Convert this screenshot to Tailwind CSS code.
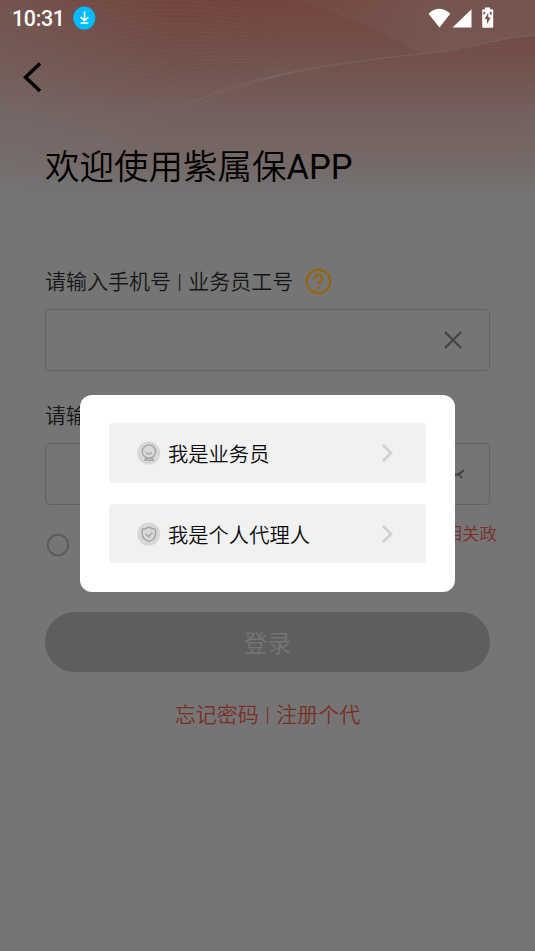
<!DOCTYPE html>
<html lang="zh-CN">
<head>
<meta charset="utf-8">
<meta name="viewport" content="width=device-width, initial-scale=1">
<title>紫属保</title>
<script src="https://cdn.jsdelivr.net/npm/@tailwindcss/browser@4"></script>
</head>
<body class="relative h-[951px] w-[535px] overflow-hidden bg-[#757575] font-['Roboto','Noto_Sans_CJK_SC',sans-serif]">
  <!-- Header artwork -->
  <svg class="absolute inset-0" width="535" height="215" viewBox="0 0 535 215" fill="none" aria-hidden="true">
    <defs>
      <linearGradient id="base" x1="0" y1="0" x2="0" y2="1">
        <stop offset="0" stop-color="#73443d"/><stop offset=".22" stop-color="#724d47"/><stop offset=".43" stop-color="#735955"/><stop offset=".52" stop-color="#73605e"/><stop offset=".75" stop-color="#756866"/><stop offset=".87" stop-color="#747171"/><stop offset="1" stop-color="#757575"/>
      </linearGradient>
      <linearGradient id="side" x1="0" y1="0" x2="1" y2="0">
        <stop offset="0" stop-color="#757575" stop-opacity=".3"/><stop offset=".32" stop-color="#757575" stop-opacity="0"/>
      </linearGradient>
      <linearGradient id="haze" gradientUnits="userSpaceOnUse" x1="330" y1="40" x2="440" y2="10">
        <stop offset="0" stop-color="#785a54" stop-opacity=".2"/><stop offset="1" stop-color="#785a54" stop-opacity=".75"/>
      </linearGradient>
    </defs>
    <rect width="535" height="215" fill="url(#base)"/>
    <rect width="535" height="215" fill="url(#side)"/>
    <path d="M290 0C350 14 392 36 420 54C470 49 510 35 535 36V0Z" fill="url(#haze)"/>
    <g id="waves" stroke="#8c8580" stroke-opacity=".13" stroke-width=".8"></g>
    <path d="M190 103C260 73 330 64 420 54C470 49 510 35 535 36" stroke="#7c7672" stroke-opacity=".6" stroke-width=".8"/>
    <path d="M420 54C470 50 510 39 535 41M440 53C480 50 515 45 535 46" stroke="#7c7672" stroke-opacity=".2" stroke-width=".8"/>
    <path d="M535 82Q529 125 504 172M535 92Q530 132 510 174M535 104Q531 140 516 176M535 118Q531 148 522 178" stroke="#888" stroke-opacity=".13" stroke-width=".8"/>
  </svg>

  <main class="relative flex h-full flex-col">
    <header class="flex h-9 items-center pl-3 pr-[41px] text-white">
      <span class="w-[61px] pt-[2px] text-[21.5px] leading-6 font-medium tracking-[-0.4px]">10:31</span>
      <svg width="23" height="24" viewBox="0 0 23 24"><ellipse cx="11.3" cy="12" rx="11" ry="11.5" fill="#00bbff"/><path d="M11.5 5.5v9M7.6 11l3.9 3.9 3.9-3.9M7.6 17h7.8" fill="none" stroke="#fff" stroke-width="1.6"/></svg>
      <div class="ml-auto flex items-center">
        <svg width="66" height="22" viewBox="0 0 66 22" fill="#fff"><path d="M.5 6.7Q11 -3 22.3 6.7L11.5 20.5ZM24.5 20.5L43.5 2.2V20.5Z"/><path fill-rule="evenodd" d="M57 .6h5v1.6h2.2q1 0 1 1v16.3q0 1.2-1 1.2h-9q-1 0-1-1.2V3.2q0-1 1-1H57ZM60 6l-3.3 6h2.3v5l3.8-6.5h-2.5V6ZM55.4 5v3l1.3-.8.8-2.2ZM61.6 5l.4 2.5L63.6 8V5Z"/></svg>
      </div>
    </header>

    <nav class="flex h-20 pl-[22px] pt-[26px]">
      <svg width="22" height="32" viewBox="0 0 22 32" fill="none"><path d="M18 1.5L3.5 15.3L18 29" stroke="#000" stroke-width="3.4"/></svg>
    </nav>

    <h1 class="mt-[26px] h-[50px] pl-[45px] text-[34.5px] leading-[50px] font-[350] whitespace-nowrap text-black">欢迎使用紫属保<span class="font-normal">APP</span></h1>

    <section class="flex flex-col px-[45px] pt-[74px]">
      <div class="flex h-[30px] items-center text-[21px] leading-[30px] font-[350] text-[#161616]">
        <label class="w-[260px] pt-[2px] [word-spacing:1.2px] whitespace-nowrap">请输入手机号 | 业务员工号</label>
        <svg width="27" height="27" viewBox="0 0 27 27" fill="none" stroke="#9c6206" stroke-width="2"><circle cx="13.4" cy="13.4" r="11.7"/><path d="M9.8 10.7C9.8 5.9 17.2 6 17.2 10.3C17.2 13 13.5 13.2 13.5 16.5M13.5 18.2v2.2"/></svg>
      </div>
      <div class="mt-[13px] flex h-[62px] items-center justify-end rounded-[5px] border-[1.5px] border-[#636363] pr-[26px]">
        <svg width="20" height="20" viewBox="0 0 20 20" fill="none" stroke="#444" stroke-width="2.3"><path d="M2 2L18 18M18 2L2 18"/></svg>
      </div>
      <div class="mt-[29px] h-[30px] pt-px text-[21px] leading-[30px] font-[350] text-[#161616]">请输</div>
      <div class="mt-[13px] flex h-[62px] items-center justify-end rounded-[5px] border-[1.5px] border-[#636363] pr-[23px]">
        <svg width="24" height="14" viewBox="0 0 24 14" fill="none" stroke="#3f3f3f" stroke-width="1.8"><path d="M2 3Q12 13 22 3M17 7.5L20 11M12 8v4M6 7L3 11"/></svg>
      </div>
    </section>

    <div class="flex h-[58px] justify-between pl-[46px] pr-[38px] pt-[14px]">
      <svg class="mt-[14px]" width="24" height="24" viewBox="0 0 24 24"><circle cx="12" cy="12" r="10.2" fill="none" stroke="#5b5b5b" stroke-width="1.9"/></svg>
      <span class="h-7 pt-px text-[17.5px] leading-7 font-[350] text-[#7b2e26]">相关政</span>
    </div>

    <button class="mx-[45px] mt-[49px] flex h-[60px] shrink-0 items-center justify-center rounded-full bg-[#5e5e5e] pt-[4px] text-[24px] font-[350] text-[#757575]">登录</button>
    <div class="mt-[28px] flex h-[30px] justify-center text-[21px] leading-[30px] font-[350] [word-spacing:1.2px] whitespace-pre text-[#7b2e26]">忘记密码 | 注册个代</div>
  </main>

  <!-- Role chooser -->
  <div role="dialog" class="absolute left-[80px] top-[395px] flex h-[197px] w-[375px] flex-col gap-[21px] rounded-[12px] bg-white px-[29px] pt-[28px]">
    <button class="flex h-[60px] items-center rounded-[4px] bg-[#f1f1f1] pl-7 pr-[32px] text-[20.3px] leading-[30px] font-[350] text-[#0c0c0c]">
      <svg width="24" height="24" viewBox="0 0 24 24" fill="none" stroke="#a5a5a5" stroke-width="1.4"><circle cx="11.7" cy="12" r="11.5" fill="#d8d8d8" stroke="none"/><circle cx="11.9" cy="10.5" r="6.6"/><path d="M9 11.5Q11.9 14.5 14.8 11.5M9 16.5L8 19.2H16L15 16.5M9.3 17.2H14.7"/></svg>
      <span class="ml-[7px] pt-[4px]">我是业务员</span>
      <svg class="ml-auto" width="14" height="20" viewBox="0 0 14 20" fill="none"><path d="M3 2L11 10L3 18" stroke="#d0d0d0" stroke-width="2.8"/></svg>
    </button>
    <button class="flex h-[59px] items-center rounded-[4px] bg-[#f1f1f1] pl-7 pr-[32px] text-[20.3px] leading-[30px] font-[350] text-[#0c0c0c]">
      <svg width="24" height="24" viewBox="0 0 24 24" fill="none" stroke="#a5a5a5" stroke-width="1.4"><circle cx="11.7" cy="12" r="11.5" fill="#d8d8d8" stroke="none"/><path d="M11.9 5.2Q14.8 7 18.5 7.3V12Q18.5 17.2 11.9 19.3Q5.3 17.2 5.3 12V7.3Q9 7 11.9 5.2ZM8.7 12L11.5 14.7L15.5 10.5"/></svg>
      <span class="ml-[7px] pt-[4px]">我是个人代理人</span>
      <svg class="ml-auto" width="14" height="20" viewBox="0 0 14 20" fill="none"><path d="M3 2L11 10L3 18" stroke="#d0d0d0" stroke-width="2.8"/></svg>
    </button>
  </div>

  <script>
    // Fan of curves blended between a low, flat wave and a high arch
    const low = [-20, 215, 70, 150, 170, 115, 275, 76];
    const high = [-20, 45, 50, -75, 250, -60, 415, 54];
    const group = document.getElementById('waves');
    const count = 36;
    for (let i = 0; i <= count; i++) {
      const t = i / count;
      const p = low.map((v, k) => (v + (high[k] - v) * t).toFixed(1));
      const path = document.createElementNS('http://www.w3.org/2000/svg', 'path');
      path.setAttribute('d', `M${p[0]} ${p[1]}C${p[2]} ${p[3]} ${p[4]} ${p[5]} ${p[6]} ${p[7]}`);
      group.appendChild(path);
    }
  </script>
</body>
</html>
